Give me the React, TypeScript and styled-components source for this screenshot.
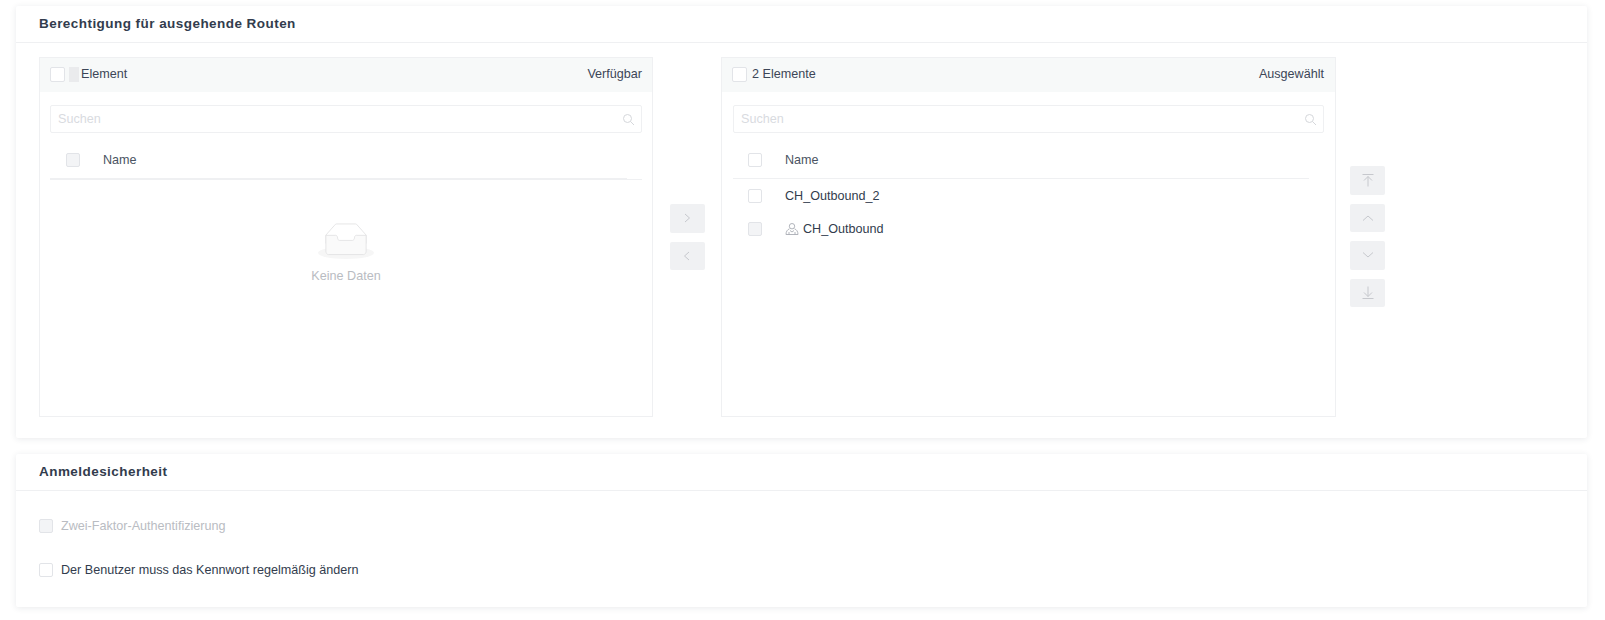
import React from 'react';
import styled, { createGlobalStyle } from 'styled-components';

const GlobalStyle = createGlobalStyle`
  html, body {
    margin: 0;
    padding: 0;
    background: #fff;
    font-family: "Liberation Sans", Arial, sans-serif;
  }
  * {
    box-sizing: border-box;
  }
`;

const Page = styled.div`
  width: 1605px;
  height: 620px;
  overflow: hidden;
  padding: 6px 18px 0 16px;
  display: flex;
  flex-direction: column;
  gap: 16px;
`;

const Card = styled.section`
  background: #fff;
  box-shadow: 0 1px 6px rgba(40, 50, 70, 0.1);
  border-radius: 2px;
`;

const CardTitle = styled.h2`
  margin: 0;
  height: 37px;
  padding-left: 23px;
  border-bottom: 1px solid #eff0f2;
  font-size: 13.5px;
  line-height: 36px;
  font-weight: bold;
  letter-spacing: 0.45px;
  color: #323c4d;
`;

const TransferBody = styled.div`
  height: 395px;
  padding: 14px 23px 0;
  display: flex;
`;

const Panel = styled.div<{ $wide?: boolean }>`
  width: ${(p) => (p.$wide ? 615 : 614)}px;
  height: 360px;
  border: 1px solid #eff0f2;
  display: flex;
  flex-direction: column;
`;

const PanelHeader = styled.div<{ $wide?: boolean }>`
  height: 34px;
  padding: 0 ${(p) => (p.$wide ? 11 : 10)}px 2px 10px;
  background: #f7f9f9;
  display: flex;
  align-items: center;
  justify-content: space-between;
  font-size: 12.6px;
  color: #3c4657;
`;

const HeaderLeft = styled.div`
  display: flex;
  align-items: center;
`;

const Box = styled.span<{ $disabled?: boolean; $large?: boolean }>`
  display: inline-block;
  flex: none;
  width: ${(p) => (p.$large ? 15 : 14)}px;
  height: ${(p) => (p.$large ? 15 : 14)}px;
  border: 1px solid #e2e4e8;
  border-radius: 2px;
  background: ${(p) => (p.$disabled ? '#f3f4f6' : '#fff')};
`;

const Masked = styled.span`
  width: 10px;
  height: 15px;
  margin: 0 2px 0 4px;
  background: #eaebed;
`;

const CountLabel = styled.span`
  margin-left: 5px;
`;

const PanelContent = styled.div<{ $wide?: boolean }>`
  padding: 13px ${(p) => (p.$wide ? 11 : 10)}px 0;
  flex: 1;
`;

const SearchBox = styled.div`
  height: 28px;
  padding: 0 6px 0 7px;
  border: 1px solid #eff0f2;
  border-radius: 2px;
  display: flex;
  align-items: center;
  justify-content: space-between;
  font-size: 12.6px;
  color: #d9dbdf;
`;

const HeadLine = styled.div`
  border-bottom: 1px solid #eff0f2;
`;

const TableHead = styled.div<{ $thick?: boolean }>`
  height: 46px;
  display: flex;
  align-items: center;
  padding: 9px 0 0 ${(p) => (p.$thick ? 16 : 15)}px;
  font-size: 12.6px;
  color: #4a5362;
  border-bottom: 1px solid #eff0f2;
  margin-right: 15px;
`;

const Row = styled.div`
  height: 33px;
  display: flex;
  align-items: center;
  padding-left: 15px;
  font-size: 12.6px;
  color: #323c4d;
`;

const RowText = styled.span`
  margin-left: 23px;
`;

const RowIcon = styled.svg`
  width: 14px;
  height: 14px;
  margin: 0 4px 0 23px;
`;

const EmptyState = styled.div`
  margin-top: 43px;
  display: flex;
  flex-direction: column;
  align-items: center;
  font-size: 12.6px;
  color: #b9bcc2;
`;

const EmptyIcon = styled.svg`
  width: 56px;
  height: 36px;
  margin-bottom: 10px;
`;

const MoveColumn = styled.div`
  width: 68px;
  padding-top: 147px;
  display: flex;
  flex-direction: column;
  align-items: center;
  gap: 9px;
`;

const OrderColumn = styled.div`
  margin-left: 14px;
  padding-top: 109px;
  display: flex;
  flex-direction: column;
  gap: 9px;
`;

const ArrowButton = styled.div`
  width: 35px;
  height: 28.5px;
  background: #f0f1f3;
  border-radius: 2px;
  display: flex;
  align-items: center;
  justify-content: center;
`;

const ArrowIcon = styled.svg`
  width: 14px;
  height: 14px;
  fill: none;
  stroke: #c6c8cd;
  stroke-width: 1;
`;

const SecurityBody = styled.div`
  height: 116px;
  padding: 28px 23px 0;
  display: flex;
  flex-direction: column;
  gap: 30px;
`;

const CheckRow = styled.label<{ $disabled?: boolean }>`
  display: flex;
  align-items: center;
  gap: 8px;
  font-size: 12.6px;
  color: ${(p) => (p.$disabled ? '#b9bcc2' : '#323c4d')};
`;

const SearchIcon = () => (
  <svg width="13" height="13" viewBox="0 0 13 13" fill="none" stroke="#d5d7db" strokeWidth="1">
    <circle cx="5.5" cy="5.5" r="4" />
    <path d="M8.5 8.5L12 12" />
  </svg>
);

const UserIcon = () => (
  <RowIcon viewBox="0 0 14 14" fill="none" stroke="#a9adb4" strokeWidth="0.9">
    <circle cx="7" cy="4.2" r="2.7" />
    <path d="M4.5 6.8C2.4 7.6 1 9.5 1 12.5H13C13 9.5 11.6 7.6 9.5 6.8" />
    <path d="M4 12.5V10M10 12.5V10" />
    <path d="M5 8.5L7 10L9 8.5" />
  </RowIcon>
);

const arrows: Record<string, string> = {
  right: 'M5 3L9.5 7L5 11',
  left: 'M9 3L4.5 7L9 11',
  up: 'M2 9.5L7 5L12 9.5',
  down: 'M2 4.5L7 9L12 4.5',
  top: 'M1.5 1.5H12.5M7 13.5V3.5M3 7.5L7 3.5L11 7.5',
  bottom: 'M1.5 12.5H12.5M7 .5V10.5M3 6.5L7 10.5L11 6.5',
};

const Arrow = ({ name }: { name: string }) => (
  <ArrowButton>
    <ArrowIcon viewBox="0 0 14 14">
      <path d={arrows[name]} />
    </ArrowIcon>
  </ArrowButton>
);

const App = () => (
  <Page>
    <GlobalStyle />
    <Card>
      <CardTitle>Berechtigung für ausgehende Routen</CardTitle>
      <TransferBody>
        <Panel>
          <PanelHeader>
            <HeaderLeft>
              <Box $large />
              <Masked />
              Element
            </HeaderLeft>
            Verfügbar
          </PanelHeader>
          <PanelContent>
            <SearchBox>
              Suchen
              <SearchIcon />
            </SearchBox>
            <HeadLine>
              <TableHead $thick>
                <Box $disabled />
                <RowText>Name</RowText>
              </TableHead>
            </HeadLine>
            <EmptyState>
              <EmptyIcon viewBox="0 0 64 41">
                <g transform="translate(0 1)" fill="none" fillRule="evenodd">
                  <ellipse fill="#f6f6f6" cx="32" cy="33" rx="32" ry="7" />
                  <g fillRule="nonzero" stroke="#e2e2e4">
                    <path d="M55 12.76L44.854 1.258C44.367.474 43.656 0 42.907 0H21.093c-.749 0-1.46.474-1.947 1.257L9 12.761V22h46v-9.24z" />
                    <path
                      d="M41.613 15.931c0-1.605.994-2.93 2.227-2.931H55v18.137C55 33.26 53.68 35 52.05 35h-40.1C10.32 35 9 33.259 9 31.137V13h11.16c1.233 0 2.227 1.323 2.227 2.928v.022c0 1.605 1.005 2.901 2.237 2.901h14.752c1.232 0 2.237-1.308 2.237-2.913v-.007z"
                      fill="#fafafa"
                    />
                  </g>
                </g>
              </EmptyIcon>
              Keine Daten
            </EmptyState>
          </PanelContent>
        </Panel>
        <MoveColumn>
          <Arrow name="right" />
          <Arrow name="left" />
        </MoveColumn>
        <Panel $wide>
          <PanelHeader $wide>
            <HeaderLeft>
              <Box $large />
              <CountLabel>2 Elemente</CountLabel>
            </HeaderLeft>
            Ausgewählt
          </PanelHeader>
          <PanelContent $wide>
            <SearchBox>
              Suchen
              <SearchIcon />
            </SearchBox>
            <TableHead>
              <Box />
              <RowText>Name</RowText>
            </TableHead>
            <Row>
              <Box />
              <RowText>CH_Outbound_2</RowText>
            </Row>
            <Row>
              <Box $disabled />
              <UserIcon />
              CH_Outbound
            </Row>
          </PanelContent>
        </Panel>
        <OrderColumn>
          <Arrow name="top" />
          <Arrow name="up" />
          <Arrow name="down" />
          <Arrow name="bottom" />
        </OrderColumn>
      </TransferBody>
    </Card>
    <Card>
      <CardTitle>Anmeldesicherheit</CardTitle>
      <SecurityBody>
        <CheckRow $disabled>
          <Box $disabled />
          Zwei-Faktor-Authentifizierung
        </CheckRow>
        <CheckRow>
          <Box />
          Der Benutzer muss das Kennwort regelmäßig ändern
        </CheckRow>
      </SecurityBody>
    </Card>
  </Page>
);

export default App;
